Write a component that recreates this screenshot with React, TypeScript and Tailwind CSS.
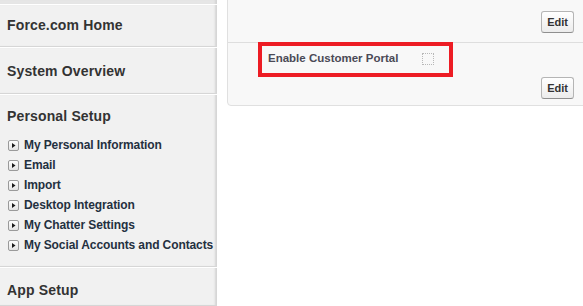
import React from 'react';

const personalLinks = [
  'My Personal Information',
  'Email',
  'Import',
  'Desktop Integration',
  'My Chatter Settings',
  'My Social Accounts and Contacts',
];

// small boxed "expand" arrow used in the setup tree
const TreeArrow: React.FC = () => (
  <svg width="11" height="11" viewBox="0 0 11 11" className="shrink-0">
    <defs>
      <linearGradient id="arrowBg" x1="0" y1="0" x2="0" y2="1">
        <stop offset="0%" stopColor="#ffffff" />
        <stop offset="100%" stopColor="#e2e2e2" />
      </linearGradient>
    </defs>
    <rect x="0.5" y="0.5" width="10" height="10" rx="1.5" fill="url(#arrowBg)" stroke="#9a9a9a" />
    <path d="M4 3 L7.5 5.5 L4 8 Z" fill="#1a1a1a" />
  </svg>
);

const EditButton: React.FC = () => (
  <button className="h-[22px] px-[5px] rounded-[3px] border border-[#b5b5b5] border-b-[#8f8f8f] bg-gradient-to-b from-white to-[#ececec] text-[11px] font-bold text-[#333] leading-none">
    Edit
  </button>
);

const Section: React.FC<{ title: string; className?: string; children?: React.ReactNode }> = ({ title, className, children }) => (
  <div className={`border-t border-t-white border-b border-b-[#d6d6d6] bg-[#f1f1f1] shadow-[inset_-3px_0_2px_-1px_#d4d4d4] ${className ?? ''}`}>
    <div className="pl-[7px] text-[14px] font-bold tracking-[0.15px] text-[#333] leading-[20px]">{title}</div>
    {children}
  </div>
);

export default function App() {
  return (
    <div className="relative w-[583px] h-[306px] overflow-hidden bg-white flex" style={{ fontFamily: '"Liberation Sans", Arial, sans-serif' }}>
      {/* Setup sidebar */}
      <div className="w-[217px] shrink-0 flex flex-col">
        <div className="h-[4px] bg-[#e6e6e6] shadow-[inset_-3px_0_2px_-1px_#d4d4d4]" />
        <Section title="Force.com Home" className="pt-[10px] pb-[11px]" />
        <Section title="System Overview" className="pt-[13px] pb-[12px]" />
        <Section title="Personal Setup" className="pt-[11px] pb-[11px]">
          <ul className="mt-[9px] flex flex-col">
            {personalLinks.map((link) => (
              <li key={link} className="h-[20px] flex items-center gap-[5px] pl-[8px]">
                <TreeArrow />
                <span className="text-[12px] font-bold tracking-[-0.1px] text-[#24303f] whitespace-nowrap">{link}</span>
              </li>
            ))}
          </ul>
        </Section>
        <Section title="App Setup" className="pt-[12px] flex-1" />
      </div>

      {/* Detail panel */}
      <div className="ml-[10px] -mt-[4px] w-[366px] shrink-0 self-start rounded-b-[4px] border border-[#e0e0e0] bg-[#f8f8f8]">
        <div className="h-[46px] flex justify-end items-start pt-[14px] pr-[18px] border-b border-[#dedede]">
          <EditButton />
        </div>
        <div className="flex flex-col pt-[6px] pb-[6px] pr-[18px]">
          <div className="flex items-end h-[16px] pl-[40px]">
            <span className="w-[154px] text-[11.5px] font-bold text-[#4a4a56] leading-[16px] self-center translate-y-[1px]">Enable Customer Portal</span>
            <span className="w-[12px] h-[12px] border border-dotted border-[#b8b8b8]" />
          </div>
          <div className="mt-[12px] flex justify-end">
            <EditButton />
          </div>
        </div>
      </div>

      {/* red annotation box */}
      <div className="absolute left-[258px] top-[42px] w-[195px] h-[35px] border-[4px] border-[#ed1c24]" />
    </div>
  );
}
